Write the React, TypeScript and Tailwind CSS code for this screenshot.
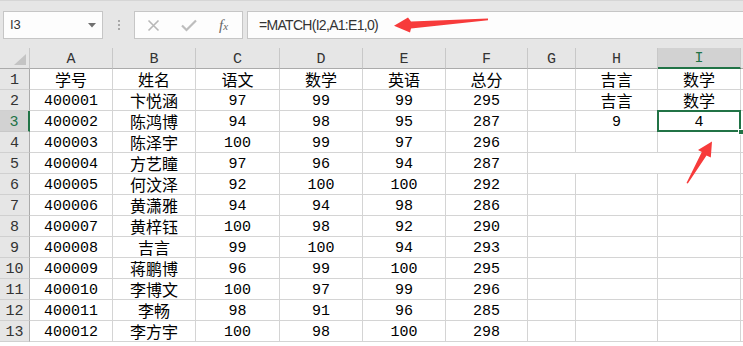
import React from 'react';

const letters = ['A', 'B', 'C', 'D', 'E', 'F', 'G', 'H', 'I'];

const rows: string[][] = [
  ['学号', '姓名', '语文', '数学', '英语', '总分', '', '吉言', '数学'],
  ['400001', '卞悦涵', '97', '99', '99', '295', '', '吉言', '数学'],
  ['400002', '陈鸿博', '94', '98', '95', '287', '', '9', '4'],
  ['400003', '陈泽宇', '100', '99', '97', '296', '', '', ''],
  ['400004', '方艺瞳', '97', '96', '94', '287', '', '', ''],
  ['400005', '何汶泽', '92', '100', '100', '292', '', '', ''],
  ['400006', '黄潇雅', '94', '94', '98', '286', '', '', ''],
  ['400007', '黄梓钰', '100', '98', '92', '290', '', '', ''],
  ['400008', '吉言', '99', '100', '94', '293', '', '', ''],
  ['400009', '蒋鹏博', '96', '99', '100', '295', '', '', ''],
  ['400010', '李博文', '100', '97', '99', '296', '', '', ''],
  ['400011', '李畅', '98', '91', '96', '285', '', '', ''],
  ['400012', '李方宇', '100', '98', '100', '298', '', '', ''],
];

const cjk = /[\u4e00-\u9fff]/;

const Cell: React.FC<{ v: string; selected?: boolean; span?: boolean }> = ({ v, selected, span }) => (
  <div
    className={
      'relative flex items-center justify-center leading-none bg-white border-r border-b border-[#d4d4d4] text-black ' +
      (span ? 'col-span-3 ' : '') +
      (cjk.test(v) ? 'text-[16px] font-["Noto_Sans_CJK_SC",sans-serif]' : 'text-[15px] pt-[2px] font-["Liberation_Mono",monospace]')
    }
  >
    {v}
    {selected && (
      <>
        <div className="absolute left-[-1px] top-[-1px] right-[-1px] bottom-[-1px] border-2 border-[#217346] z-10" />
        <div className="absolute right-[-4px] bottom-[-4px] w-[6px] h-[6px] bg-[#217346] border border-white z-10" />
      </>
    )}
  </div>
);

const RowHead: React.FC<{ n: number }> = ({ n }) =>
  n === 3 ? (
    <div className="flex items-center justify-center leading-none pt-[2px] bg-[#d2d2d2] border-b border-[#c8c8c8] border-r-2 border-r-[#217346] text-[#217346] text-[15px] font-['Liberation_Mono',monospace]">
      {n}
    </div>
  ) : (
    <div className="flex items-center justify-center leading-none pt-[2px] bg-[#e6e6e6] border-b border-[#d0d0d0] border-r border-r-[#ababab] text-[#333] text-[15px] font-['Liberation_Mono',monospace]">
      {n}
    </div>
  );

const TopBar: React.FC = () => (
  <div className="h-[48px] bg-[#e6e6e6] border-t border-[#d6d6d6] flex items-start pt-[10px]">
    <div className="ml-[3px] w-[100px] h-[28px] bg-[#fdfdfd] border border-[#c6c6c6] flex items-center justify-between pl-[6px] pr-[6px]">
      <span className="text-[13px] text-[#333] font-['Liberation_Sans',sans-serif]">I3</span>
      <svg width="8" height="5" viewBox="0 0 8 5">
        <polygon points="0,0 8,0 4,4.5" fill="#707070" />
      </svg>
    </div>
    <div className="w-[31px] h-[28px] flex flex-col items-center justify-center gap-[2px]">
      <div className="w-[2px] h-[2px] bg-[#a8a8a8]" />
      <div className="w-[2px] h-[2px] bg-[#a8a8a8]" />
      <div className="w-[2px] h-[2px] bg-[#a8a8a8]" />
    </div>
    <div className="w-[109px] h-[28px] bg-[#fdfdfd] border border-[#c6c6c6] flex items-center">
      <svg className="ml-[12px]" width="13" height="13" viewBox="0 0 13 13">
        <path d="M1.5 1.5 L11.5 11.5 M11.5 1.5 L1.5 11.5" stroke="#b8b8b8" strokeWidth="1.6" />
      </svg>
      <svg className="ml-[21px]" width="16" height="13" viewBox="0 0 16 13">
        <path d="M1 6.5 L5.5 11 L15 1.5" stroke="#bdbdbd" strokeWidth="2.2" fill="none" />
      </svg>
      <span className="ml-[22px] text-[15px] italic text-[#666] font-['Liberation_Serif',serif] leading-none">
        f<span className="text-[11px]">x</span>
      </span>
    </div>
    <div className="ml-[4px] flex-1 h-[28px] bg-[#fdfdfd] border-y border-l border-[#c6c6c6] flex items-center pl-[11px]">
      <span className="text-[14px] tracking-[-0.7px] text-[#333] font-['Liberation_Sans',sans-serif]">=MATCH(I2,A1:E1,0)</span>
    </div>
  </div>
);

export default function App() {
  return (
    <div className="relative w-[743px] h-[346px] overflow-hidden bg-white">
      <TopBar />
      <div className="grid grid-cols-[30px_83px_83px_84px_83px_83px_82px_48px_82px_83px_2px] auto-rows-[21px]">
        <div className="relative bg-[#e6e6e6] border-r border-b border-r-[#c8c8c8] border-b-[#ababab]">
          <svg className="absolute right-[3px] bottom-[3px]" width="12" height="11" viewBox="0 0 12 11">
            <polygon points="12,0 12,11 0,11" fill="#c4c4c4" />
          </svg>
        </div>
        {letters.map((l) =>
          l === 'I' ? (
            <div
              key={l}
              className="flex items-center justify-center leading-none pt-[2px] bg-[#d2d2d2] border-r border-r-[#c8c8c8] border-b-2 border-b-[#217346] text-[#217346] text-[15px] font-['Liberation_Mono',monospace]"
            >
              {l}
            </div>
          ) : (
            <div
              key={l}
              className="flex items-center justify-center leading-none pt-[2px] bg-[#e6e6e6] border-r border-b border-r-[#c8c8c8] border-b-[#ababab] text-[#333] text-[15px] font-['Liberation_Mono',monospace]"
            >
              {l}
            </div>
          )
        )}
        <div className="bg-[#e6e6e6] border-b border-b-[#ababab]" />
        {rows.map((r, i) => {
          const n = i + 1;
          return (
            <React.Fragment key={n}>
              <RowHead n={n} />
              {n === 5 ? (
                <>
                  {r.slice(0, 6).map((v, j) => (
                    <Cell key={j} v={v} />
                  ))}
                  <Cell v="" span />
                </>
              ) : (
                r.map((v, j) => <Cell key={j} v={v} selected={n === 3 && j === 8} />)
              )}
              <div className="bg-white border-b border-[#d4d4d4]" />
            </React.Fragment>
          );
        })}
      </div>
      <svg className="absolute inset-0 z-20 pointer-events-none" width="743" height="346" viewBox="0 0 743 346">
        <polygon points="394,25.7 408,17.5 411,21.5 488,18.6 488,20.2 411,28.5 410,32.5" fill="#f73b3b" />
        <polygon points="712,141.5 710.8,157.5 706.5,155.5 687.8,183.5 686.5,183 701.8,152 698,150" fill="#f73b3b" />
      </svg>
    </div>
  );
}
